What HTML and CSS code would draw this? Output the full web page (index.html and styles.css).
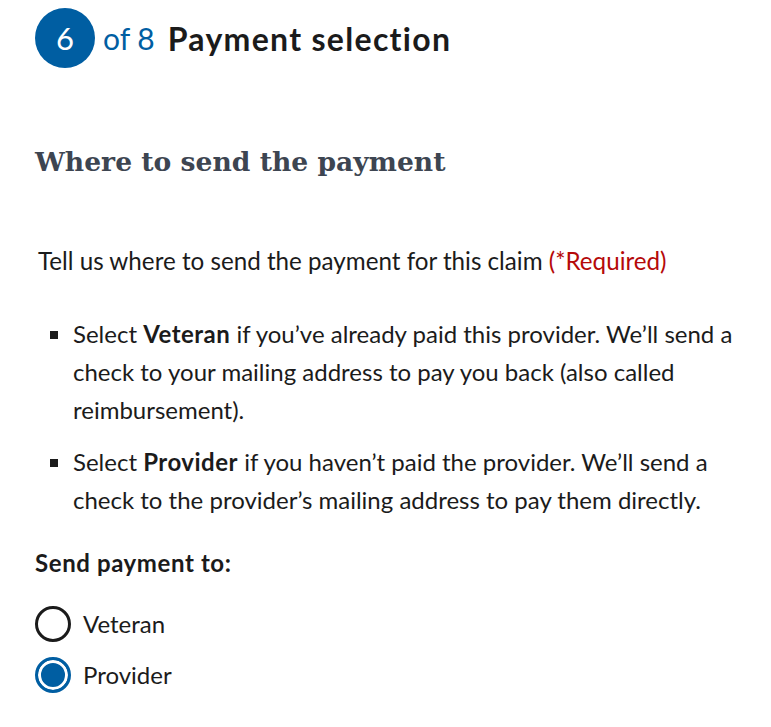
FILE: index.html
```
<!DOCTYPE html>
<html lang="en">
<head>
<meta charset="utf-8">
<title>Payment selection</title>
<link rel="stylesheet" href="styles.css">
</head>
<body>
<main class="page">
  <header class="step">
    <span class="step-num">6</span>
    <span class="step-of">of 8</span>
    <h1 class="step-title">Payment selection</h1>
  </header>

  <h2 class="section-title">Where to send the payment</h2>

  <p class="hint">Tell us where to send the payment for this claim <span class="required">(*Required)</span></p>

  <ul class="info-list">
    <li>Select <strong>Veteran</strong> if you’ve already paid this provider. We’ll send a check to your mailing address to pay you back (also called reimbursement).</li>
    <li>Select <strong>Provider</strong> if you haven’t paid the provider. We’ll send a check to the provider’s mailing address to pay them directly.</li>
  </ul>

  <fieldset class="radios">
    <legend class="radios-legend">Send payment to:</legend>
    <label class="radio">
      <input type="radio" name="payto" value="veteran">
      <span class="radio-mark"></span>
      <span class="radio-label">Veteran</span>
    </label>
    <label class="radio">
      <input type="radio" name="payto" value="provider" checked>
      <span class="radio-mark"></span>
      <span class="radio-label">Provider</span>
    </label>
  </fieldset>
</main>
</body>
</html>
```
FILE: styles.css
```
html, body {
  margin: 0;
  padding: 0;
  background: #ffffff;
}
body {
  font-family: Lato, "Noto Sans", sans-serif;
  color: #1b1b1b;
}
.page {
  padding: 8px 30px 0 35px;
}
.step {
  display: flex;
  align-items: center;
  height: 60px;
}
.step-num {
  width: 60px;
  height: 60px;
  border-radius: 50%;
  background: #005ea2;
  color: #fff;
  font-size: 31px;
  display: flex;
  align-items: center;
  justify-content: center;
}
.step-of {
  color: #005ea2;
  font-size: 30px;
  margin-left: 8px;
}
.step-title {
  margin: 0 0 0 13px;
  font-size: 32px;
  letter-spacing: 1.3px;
  font-weight: 700;
}
.section-title {
  font-family: "DejaVu Serif", serif;
  font-weight: 700;
  font-size: 26.6px;
  color: #3d4551;
  margin: 78px 0 0 0;
  line-height: 32px;
}
.hint {
  margin: 68px 0 0 3px;
  font-size: 24.2px;
  line-height: 30px;
}
.required {
  color: #b50909;
}
.info-list {
  margin: 39px 0 0 0;
  padding: 0 0 0 38px;
  list-style: square;
  font-size: 24px;
  line-height: 38px;
}
.info-list strong {
  letter-spacing: 0.5px;
}
.info-list li + li {
  margin-top: 14px;
}
.radios {
  border: 0;
  margin: 29px 0 0 0;
  padding: 0;
}
.radios-legend {
  padding: 0;
  font-size: 24px;
  line-height: 30px;
  font-weight: 700;
  letter-spacing: 0.6px;
}
.radio {
  display: flex;
  align-items: center;
  margin-top: 28px;
  font-size: 24px;
  line-height: 30px;
}
.radio + .radio {
  margin-top: 15px;
}
.radio input {
  position: absolute;
  opacity: 0;
}
.radio-mark {
  width: 36px;
  height: 36px;
  box-sizing: border-box;
  border-radius: 50%;
  border: 3px solid #1b1b1b;
  margin-right: 12px;
}
.radio input:checked + .radio-mark {
  border-color: #005ea2;
  background: #005ea2;
  box-shadow: inset 0 0 0 3px #fff;
}
```
